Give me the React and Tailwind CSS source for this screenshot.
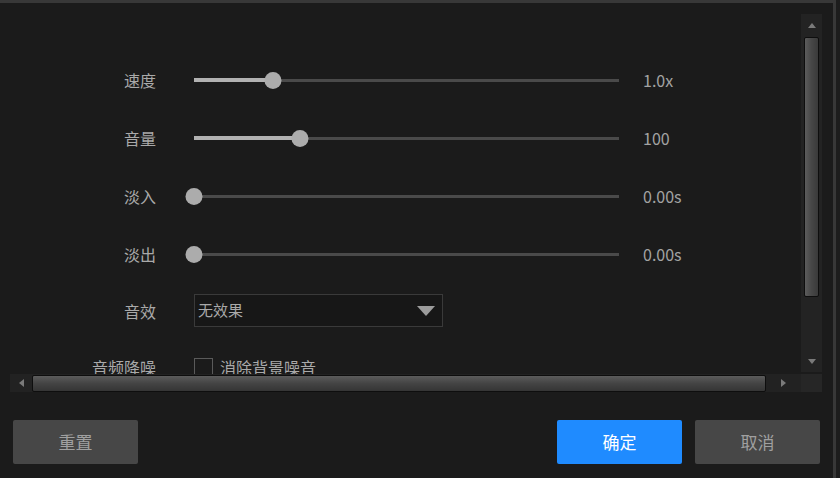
import React from 'react';

const font = "font-['Noto_Sans_CJK_SC','Noto_Sans',sans-serif]";

const Slider = ({ pct }) => (
    <div className="relative h-[17px] w-[425px]">
        <div className="absolute left-0 right-0 top-[7px] h-[3px] bg-[#4a4a4a]" />
        <div className="absolute left-0 top-[6px] h-[4px] bg-[#b2b2b2]" style={{ width: pct + '%' }} />
        <div
            className="absolute top-0 h-[17px] w-[17px] -translate-x-1/2 rounded-full bg-[#acacac]"
            style={{ left: pct + '%' }}
        />
    </div>
);

const rows = [
    { label: '速度', pct: 18.5, value: '1.0x' },
    { label: '音量', pct: 25, value: '100' },
    { label: '淡入', pct: 0, value: '0.00s' },
    { label: '淡出', pct: 0, value: '0.00s' },
];

const App = () => {
    return (
        <div className={`flex h-[478px] w-[840px] overflow-hidden bg-[#1b1b1b] ${font}`}>
            <div className="flex w-[833px] flex-col">
                <div className="h-[3px] bg-[#383838]" />

                {/* Scroll area */}
                <div className="ml-[10px] mt-[11px] flex w-[812px] flex-col">
                    <div className="flex h-[360px]">
                        <div className="w-[791px] overflow-hidden pt-[37px]">
                            {rows.map((r) => (
                                <div key={r.label} className="flex h-[58px] items-center">
                                    <div className="w-[146px] text-right text-[16px] text-[#a9a9a9]">{r.label}</div>
                                    <div className="ml-[38px]">
                                        <Slider pct={r.pct} />
                                    </div>
                                    <div className="ml-[24px] text-[16px] text-[#a3a3a3]">{r.value}</div>
                                </div>
                            ))}

                            {/* Sound effect */}
                            <div className="flex h-[55px] items-center">
                                <div className="w-[146px] text-right text-[16px] text-[#a9a9a9]">音效</div>
                                <div className="ml-[38px] flex h-[33px] w-[249px] items-center justify-between border border-[#3a3a3a] bg-[#171717] pl-[3px] pr-[7px]">
                                    <span className="text-[15px] text-[#a9a9a9]">无效果</span>
                                    <span className="h-0 w-0 border-x-[9px] border-t-[10px] border-x-transparent border-t-[#9c9c9c]" />
                                </div>
                            </div>

                            {/* Denoise */}
                            <div className="flex h-[58px] items-center">
                                <div className="w-[146px] text-right text-[16px] text-[#a9a9a9]">音频降噪</div>
                                <div className="ml-[38px] h-[19px] w-[19px] border border-[#5a5a5a]" />
                                <div className="ml-[7px] text-[16px] text-[#a9a9a9]">消除背景噪音</div>
                            </div>
                        </div>

                        {/* Vertical scrollbar */}
                        <div className="flex h-[358px] w-[21px] flex-col items-center bg-[#232323]">
                            <div className="flex h-[23px] items-center justify-center">
                                <span className="h-0 w-0 border-x-[4px] border-b-[5px] border-x-transparent border-b-[#7a7a7a]" />
                            </div>
                            <div className="h-[260px] w-[15px] rounded-[2px] border border-[#0e0e0e] bg-gradient-to-r from-[#5c5c5c] via-[#474747] to-[#3a3a3a]" />
                            <div className="flex-1" />
                            <div className="flex h-[22px] items-center justify-center">
                                <span className="h-0 w-0 border-x-[4px] border-t-[5px] border-x-transparent border-t-[#7a7a7a]" />
                            </div>
                        </div>
                    </div>

                    {/* Horizontal scrollbar */}
                    <div className="flex h-[18px]">
                        <div className="flex w-[791px] items-center bg-[#222222]">
                            <div className="flex w-[22px] justify-center">
                                <span className="h-0 w-0 border-y-[4px] border-r-[5px] border-y-transparent border-r-[#7a7a7a]" />
                            </div>
                            <div className="h-[17px] w-[734px] rounded-[2px] border border-[#0e0e0e] bg-gradient-to-b from-[#5c5c5c] via-[#444444] to-[#353535]" />
                            <div className="flex flex-1 justify-center">
                                <span className="h-0 w-0 border-y-[4px] border-l-[5px] border-y-transparent border-l-[#7a7a7a]" />
                            </div>
                        </div>
                        <div className="w-[21px] bg-[#262626]" />
                    </div>
                </div>

                {/* Footer */}
                <div className="mt-[28px] flex justify-between px-[13px]">
                    <button className="h-[44px] w-[125px] rounded-[2px] bg-[#474747] text-[17px] text-[#a0a0a0]">重置</button>
                    <div className="flex gap-[13px]">
                        <button className="h-[44px] w-[125px] rounded-[2px] bg-[#1f8bff] text-[17px] text-white">确定</button>
                        <button className="h-[44px] w-[125px] rounded-[2px] bg-[#474747] text-[17px] text-[#a0a0a0]">取消</button>
                    </div>
                </div>
            </div>
            <div className="w-[3px] bg-[#383838]" />
            <div className="flex-1 bg-[#1d1d1d]" />
        </div>
    );
};

export default App;
